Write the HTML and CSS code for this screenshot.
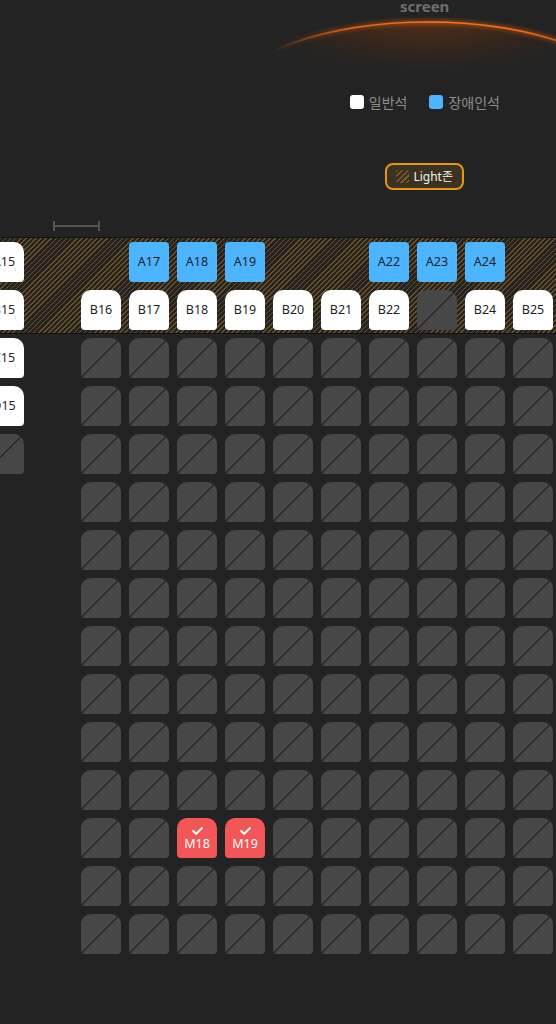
FILE: index.html
```html
<!DOCTYPE html>
<html lang="ko">
<head>
<meta charset="utf-8">
<title>Seat map</title>
<link rel="stylesheet" href="styles.css">
</head>
<body>
<div class="page">
  <div class="screen">
    <svg class="screen-arc" width="556" height="80" viewBox="0 0 556 80">
      <defs>
        <radialGradient id="glow" cx="428" cy="22" r="190" gradientUnits="userSpaceOnUse" gradientTransform="translate(428 22) scale(1 0.3) translate(-428 -22)">
          <stop offset="0" stop-color="#6a3414" stop-opacity="0.7"/>
          <stop offset="0.6" stop-color="#4a2814" stop-opacity="0.3"/>
          <stop offset="1" stop-color="#232323" stop-opacity="0"/>
        </radialGradient>
        <linearGradient id="edge" x1="272" y1="0" x2="640" y2="0" gradientUnits="userSpaceOnUse">
          <stop offset="0" stop-color="#ff6a10" stop-opacity="0"/>
          <stop offset="0.22" stop-color="#ff6a10" stop-opacity="0.8"/>
          <stop offset="0.45" stop-color="#ff7416" stop-opacity="1"/>
          <stop offset="0.7" stop-color="#ff6a10" stop-opacity="0.9"/>
          <stop offset="1" stop-color="#ff6a10" stop-opacity="0.3"/>
        </linearGradient>
        <filter id="blur" x="-20%" y="-50%" width="140%" height="200%">
          <feGaussianBlur stdDeviation="2"/>
        </filter>
      </defs>
      <ellipse cx="428" cy="98" rx="196" ry="76" fill="url(#glow)"/>
      <ellipse cx="428" cy="98" rx="196" ry="76" fill="none" stroke="url(#edge)" stroke-width="4" opacity="0.5" filter="url(#blur)"/>
      <ellipse cx="428" cy="98" rx="196" ry="76" fill="none" stroke="url(#edge)" stroke-width="1.6"/>
    </svg>
    <span class="screen-label">screen</span>
  </div>

  <div class="legend">
    <div class="legend-item"><span class="swatch swatch-white"></span><span class="legend-text">일반석</span></div>
    <div class="legend-item"><span class="swatch swatch-blue"></span><span class="legend-text">장애인석</span></div>
  </div>

  <div class="zone-row">
    <div class="zone-badge"><span class="zone-icon"></span><span class="zone-text">Light존</span></div>
  </div>

  <div class="scale"></div>

  <div class="band">
    <div class="row">
      <div class="seat white">A15</div><div class="aisle"></div>
      <div class="seat empty"></div>
      <div class="seat blue">A17</div>
      <div class="seat blue">A18</div>
      <div class="seat blue">A19</div>
      <div class="seat empty"></div>
      <div class="seat empty"></div>
      <div class="seat blue">A22</div>
      <div class="seat blue">A23</div>
      <div class="seat blue">A24</div>
      <div class="seat empty"></div>
    </div>
    <div class="row">
      <div class="seat white">B15</div><div class="aisle"></div>
      <div class="seat white">B16</div>
      <div class="seat white">B17</div>
      <div class="seat white">B18</div>
      <div class="seat white">B19</div>
      <div class="seat white">B20</div>
      <div class="seat white">B21</div>
      <div class="seat white">B22</div>
      <div class="seat gray"></div>
      <div class="seat white">B24</div>
      <div class="seat white">B25</div>
    </div>
  </div>

  <div class="rows">
    <div class="row">
      <div class="seat white">C15</div><div class="aisle"></div>
      <div class="seat gray"></div><div class="seat gray"></div><div class="seat gray"></div><div class="seat gray"></div><div class="seat gray"></div>
      <div class="seat gray"></div><div class="seat gray"></div><div class="seat gray"></div><div class="seat gray"></div><div class="seat gray"></div>
    </div>
    <div class="row">
      <div class="seat white">D15</div><div class="aisle"></div>
      <div class="seat gray"></div><div class="seat gray"></div><div class="seat gray"></div><div class="seat gray"></div><div class="seat gray"></div>
      <div class="seat gray"></div><div class="seat gray"></div><div class="seat gray"></div><div class="seat gray"></div><div class="seat gray"></div>
    </div>
    <div class="row">
      <div class="seat gray"></div><div class="aisle"></div>
      <div class="seat gray"></div><div class="seat gray"></div><div class="seat gray"></div><div class="seat gray"></div><div class="seat gray"></div>
      <div class="seat gray"></div><div class="seat gray"></div><div class="seat gray"></div><div class="seat gray"></div><div class="seat gray"></div>
    </div>
    <div class="row">
      <div class="seat empty"></div><div class="aisle"></div>
      <div class="seat gray"></div><div class="seat gray"></div><div class="seat gray"></div><div class="seat gray"></div><div class="seat gray"></div>
      <div class="seat gray"></div><div class="seat gray"></div><div class="seat gray"></div><div class="seat gray"></div><div class="seat gray"></div>
    </div>
    <div class="row">
      <div class="seat empty"></div><div class="aisle"></div>
      <div class="seat gray"></div><div class="seat gray"></div><div class="seat gray"></div><div class="seat gray"></div><div class="seat gray"></div>
      <div class="seat gray"></div><div class="seat gray"></div><div class="seat gray"></div><div class="seat gray"></div><div class="seat gray"></div>
    </div>
    <div class="row">
      <div class="seat empty"></div><div class="aisle"></div>
      <div class="seat gray"></div><div class="seat gray"></div><div class="seat gray"></div><div class="seat gray"></div><div class="seat gray"></div>
      <div class="seat gray"></div><div class="seat gray"></div><div class="seat gray"></div><div class="seat gray"></div><div class="seat gray"></div>
    </div>
    <div class="row">
      <div class="seat empty"></div><div class="aisle"></div>
      <div class="seat gray"></div><div class="seat gray"></div><div class="seat gray"></div><div class="seat gray"></div><div class="seat gray"></div>
      <div class="seat gray"></div><div class="seat gray"></div><div class="seat gray"></div><div class="seat gray"></div><div class="seat gray"></div>
    </div>
    <div class="row">
      <div class="seat empty"></div><div class="aisle"></div>
      <div class="seat gray"></div><div class="seat gray"></div><div class="seat gray"></div><div class="seat gray"></div><div class="seat gray"></div>
      <div class="seat gray"></div><div class="seat gray"></div><div class="seat gray"></div><div class="seat gray"></div><div class="seat gray"></div>
    </div>
    <div class="row">
      <div class="seat empty"></div><div class="aisle"></div>
      <div class="seat gray"></div><div class="seat gray"></div><div class="seat gray"></div><div class="seat gray"></div><div class="seat gray"></div>
      <div class="seat gray"></div><div class="seat gray"></div><div class="seat gray"></div><div class="seat gray"></div><div class="seat gray"></div>
    </div>
    <div class="row">
      <div class="seat empty"></div><div class="aisle"></div>
      <div class="seat gray"></div><div class="seat gray"></div><div class="seat gray"></div><div class="seat gray"></div><div class="seat gray"></div>
      <div class="seat gray"></div><div class="seat gray"></div><div class="seat gray"></div><div class="seat gray"></div><div class="seat gray"></div>
    </div>
    <div class="row">
      <div class="seat empty"></div><div class="aisle"></div>
      <div class="seat gray"></div><div class="seat gray"></div>
      <div class="seat red"><svg class="check" width="11" height="8" viewBox="0 0 11 8"><path d="M1.2 4 L4.2 6.8 L9.8 1.2" fill="none" stroke="#fff" stroke-width="2.2" stroke-linecap="round" stroke-linejoin="round"/></svg><span>M18</span></div>
      <div class="seat red"><svg class="check" width="11" height="8" viewBox="0 0 11 8"><path d="M1.2 4 L4.2 6.8 L9.8 1.2" fill="none" stroke="#fff" stroke-width="2.2" stroke-linecap="round" stroke-linejoin="round"/></svg><span>M19</span></div>
      <div class="seat gray"></div>
      <div class="seat gray"></div><div class="seat gray"></div><div class="seat gray"></div><div class="seat gray"></div><div class="seat gray"></div>
    </div>
    <div class="row">
      <div class="seat empty"></div><div class="aisle"></div>
      <div class="seat gray"></div><div class="seat gray"></div><div class="seat gray"></div><div class="seat gray"></div><div class="seat gray"></div>
      <div class="seat gray"></div><div class="seat gray"></div><div class="seat gray"></div><div class="seat gray"></div><div class="seat gray"></div>
    </div>
    <div class="row">
      <div class="seat empty"></div><div class="aisle"></div>
      <div class="seat gray"></div><div class="seat gray"></div><div class="seat gray"></div><div class="seat gray"></div><div class="seat gray"></div>
      <div class="seat gray"></div><div class="seat gray"></div><div class="seat gray"></div><div class="seat gray"></div><div class="seat gray"></div>
    </div>
  </div>
</div>
</body>
</html>
```

FILE: styles.css
```css
* { box-sizing: border-box; }

html, body {
  margin: 0;
  padding: 0;
  background: #232323;
}

body {
  width: 556px;
  height: 1024px;
  overflow: hidden;
  font-family: "Noto Sans", "Noto Sans CJK KR", sans-serif;
}

.page {
  width: 556px;
  height: 1024px;
  overflow: hidden;
}

.screen {
  position: relative;
  height: 80px;
}

.screen-arc {
  display: block;
}

.screen-label {
  position: absolute;
  left: 400px;
  top: -4px;
  font-size: 15px;
  line-height: 20px;
  font-weight: 700;
  color: #6e6e6e;
}

.legend {
  display: flex;
  justify-content: flex-end;
  gap: 22px;
  padding: 15px 56px 0 0;
}

.legend-item {
  display: flex;
  align-items: center;
  gap: 5px;
  height: 14px;
}

.swatch {
  width: 14px;
  height: 14px;
  border-radius: 3px;
}

.swatch-white { background: #ffffff; }
.swatch-blue { background: #4db4ff; }

.legend-text {
  font-family: "Noto Sans CJK KR", sans-serif;
  font-size: 14px;
  line-height: 14px;
  color: #8e8e8e;
}

.zone-row {
  display: flex;
  justify-content: flex-end;
  padding-right: 92px;
  margin-top: 54px;
}

.zone-badge {
  display: flex;
  align-items: center;
  gap: 4px;
  height: 27px;
  padding: 0 9px 0 9px;
  border: 2px solid #e8950f;
  border-radius: 8px;
  background: #3b3222;
}

.zone-icon {
  width: 13px;
  height: 13px;
  border-radius: 2px;
  background: repeating-linear-gradient(135deg, #7b5a2b 0 1.5px, #3b3222 1.5px 4px);
}

.zone-text {
  font-family: "Noto Sans", "Noto Sans CJK KR", sans-serif;
  font-size: 12px;
  line-height: 16px;
  color: #f2f2f2;
}

.scale {
  margin: 31px 0 0 53px;
  width: 47px;
  height: 10px;
  border-left: 2px solid #555555;
  border-right: 2px solid #555555;
  background: linear-gradient(#555555, #555555) center / 100% 2px no-repeat;
}

.band {
  margin-top: 6px;
  display: flex;
  flex-direction: column;
  gap: 8px;
  padding: 4px 0 3px;
  border-top: 1px solid #121212;
  border-bottom: 1px solid #121212;
  background: repeating-linear-gradient(135deg, #6a5027 0 1.2px, #242321 1.2px 3.6px);
}

.rows {
  margin-top: 4px;
  display: flex;
  flex-direction: column;
  gap: 8px;
}

.row {
  display: flex;
  gap: 8px;
  margin-left: -16px;
}

.aisle {
  width: 41px;
  flex: none;
}

.seat {
  flex: none;
  width: 40px;
  height: 40px;
  border-radius: 10px 10px 4px 4px;
  display: flex;
  align-items: center;
  justify-content: center;
  font-size: 12.5px;
  color: #1f1f1f;
  line-height: 14px;
}

.seat.white { background: #ffffff; }

.seat.blue {
  background: #4db4ff;
  border-radius: 4px;
}

.seat.gray {
  background-color: #474747;
  background-image: linear-gradient(to bottom right, transparent calc(50% - 1px), #2a2a2a calc(50% - 1px), #2a2a2a calc(50% + 0.6px), transparent calc(50% + 0.6px));
}

.seat.red {
  background: #f25656;
  color: #ffffff;
  flex-direction: column;
  gap: 2px;
  padding-top: 1px;
}

.check { display: block; }

.seat.empty { visibility: hidden; }
```
